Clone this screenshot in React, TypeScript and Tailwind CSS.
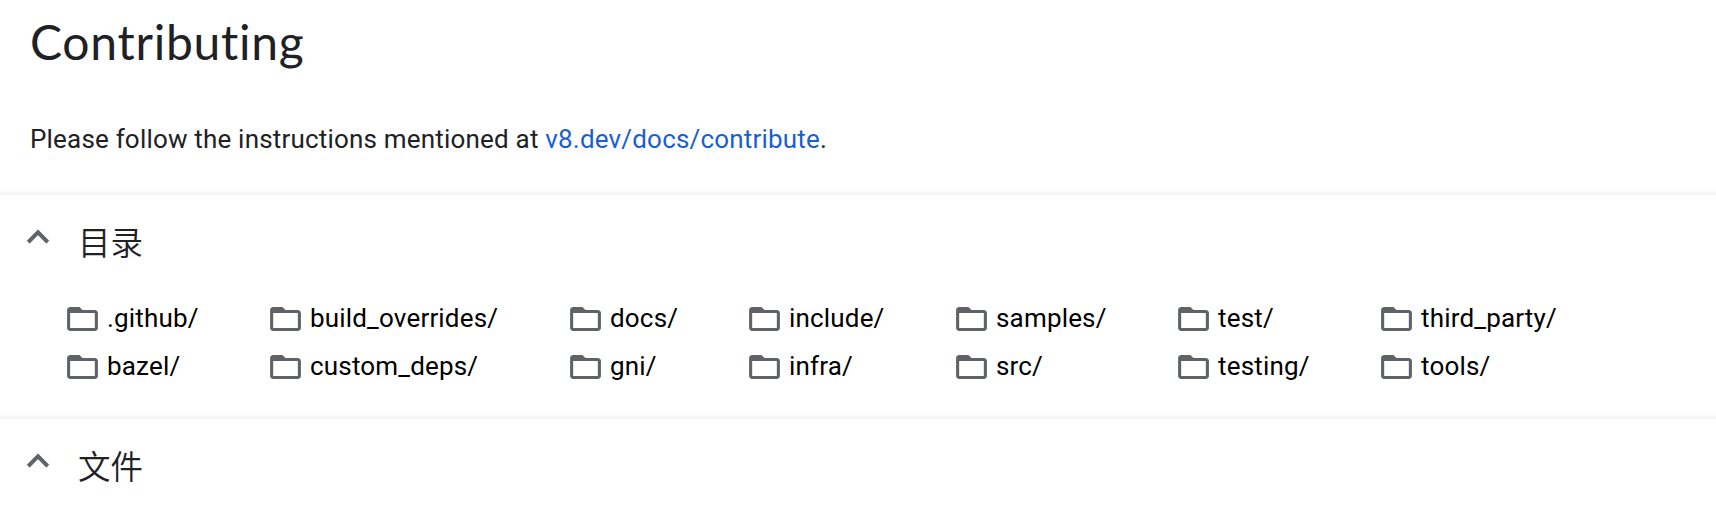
import React from "react";

type Column = { width: string; entries: string[] };

const columns: Column[] = [
  { width: "w-[203px]", entries: [".github/", "bazel/"] },
  { width: "w-[300px]", entries: ["build_overrides/", "custom_deps/"] },
  { width: "w-[179px]", entries: ["docs/", "gni/"] },
  { width: "w-[207px]", entries: ["include/", "infra/"] },
  { width: "w-[222px]", entries: ["samples/", "src/"] },
  { width: "w-[203px]", entries: ["test/", "testing/"] },
  { width: "w-[220px]", entries: ["third_party/", "tools/"] },
];

function FolderIcon() {
  return (
    <svg viewBox="0 0 24 24" className="mt-px h-9 w-[37px] shrink-0 fill-[#5f6368]" preserveAspectRatio="none" aria-hidden="true">
      <path d="M20 6h-8l-2-2H4c-1.1 0-1.99.9-1.99 2L2 18c0 1.1.9 2 2 2h16c1.1 0 2-.9 2-2V8c0-1.1-.9-2-2-2zm0 12H4V8h16v10z" />
    </svg>
  );
}

function SectionHeader({ title }: { title: string }) {
  return (
    <div className="flex h-[91px] pl-4">
      <svg viewBox="0 0 24 24" className="mt-5 size-11 shrink-0 fill-[#5f6368] stroke-[#5f6368] stroke-[0.4]" aria-hidden="true">
        <path d="M12 8.1l-5.9 5.9 1.31 1.41L12 10.83l4.59 4.58L17.9 14z" />
      </svg>
      <h2 className="mt-[22px] ml-[18px] font-['Noto_Sans_CJK_SC',sans-serif] text-[32.5px] leading-[48px] font-[350] text-[#202124]">
        {title}
      </h2>
    </div>
  );
}

function Divider() {
  return <div className="h-[7px] shrink-0 bg-linear-to-b from-white via-[#fcfcfc] to-[#f2f2f2]" />;
}

export default function App() {
  return (
    <main className="flex h-[510px] w-[1716px] flex-col overflow-hidden bg-white font-['Roboto',sans-serif]">
      <section className="h-[188px] shrink-0 pl-[30px] text-[#202124]">
        <h1 className="pt-2.5 font-['Lato',sans-serif] text-[48px] leading-[64px] tracking-[0.75px] [font-variant-ligatures:none]">Contributing</h1>
        <p className="mt-[45px] text-[26px] leading-10 tracking-[0.19px]">
          Please follow the instructions mentioned at{" "}
          <a href="#contribute" className="text-[#1a5fce]">v8.dev/docs/contribute</a>.
        </p>
      </section>
      <Divider />
      <section className="h-[217px] shrink-0">
        <SectionHeader title="目录" />
        <div className="flex pt-2 pl-16">
          {columns.map((column) => (
            <ul key={column.entries[0]} className={column.width}>
              {column.entries.map((entry) => (
                <li key={entry} className="flex h-12 items-center gap-1.5">
                  <FolderIcon />
                  <span className="text-[26px] leading-10 tracking-[0.175px] text-black">{entry}</span>
                </li>
              ))}
            </ul>
          ))}
        </div>
      </section>
      <Divider />
      <section className="shrink-0">
        <SectionHeader title="文件" />
      </section>
    </main>
  );
}
